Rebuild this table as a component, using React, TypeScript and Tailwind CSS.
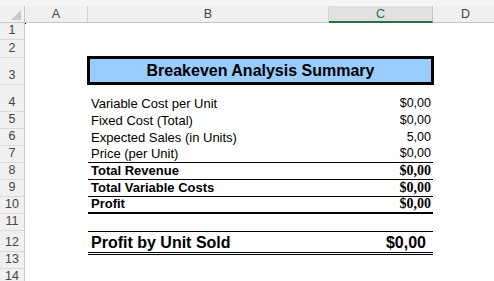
import React from "react";

type Row = {
  n: number;
  h: string;
  kind: "empty" | "title" | "data" | "big";
  label?: string;
  value?: string;
  bold?: boolean;
  border?: "none" | "thin" | "thick";
};

const rows: Row[] = [
  { n: 1, h: "h-[17px]", kind: "empty" },
  { n: 2, h: "h-[18px]", kind: "empty" },
  { n: 3, h: "h-[27px]", kind: "title" },
  { n: 4, h: "h-[27px]", kind: "data", label: "Variable Cost per Unit", value: "$0,00" },
  { n: 5, h: "h-[17px]", kind: "data", label: "Fixed Cost (Total)", value: "$0,00" },
  { n: 6, h: "h-[17px]", kind: "data", label: "Expected Sales (in Units)", value: "5,00" },
  { n: 7, h: "h-[17px]", kind: "data", label: "Price (per Unit)", value: "$0,00", border: "thin" },
  { n: 8, h: "h-[17px]", kind: "data", label: "Total Revenue", value: "$0,00", bold: true, border: "thin" },
  { n: 9, h: "h-[17px]", kind: "data", label: "Total Variable Costs", value: "$0,00", bold: true, border: "thin" },
  { n: 10, h: "h-[17px]", kind: "data", label: "Profit", value: "$0,00", bold: true, border: "thick" },
  { n: 11, h: "h-[17px]", kind: "empty" },
  { n: 12, h: "h-[21px]", kind: "big" },
  { n: 13, h: "h-[17px]", kind: "empty" },
  { n: 14, h: "h-[17px]", kind: "empty" },
];

function RowHead({ n }: { n: number }) {
  return (
    <div className="w-[25px] shrink-0 h-full bg-[#f0f0f0] border-r border-r-[#c6c6c6] border-b border-b-[#dadada] flex items-end justify-center text-[12.5px] leading-[15px] text-[#444] pb-[1px]">
      {n}
    </div>
  );
}

function DataCells({ r }: { r: Row }) {
  const borderCls =
    r.border === "thick"
      ? "border-b-2 border-black"
      : r.border === "thin"
      ? "border-b border-black"
      : "";
  return (
    <div className={`w-[345px] shrink-0 flex h-full items-end ${borderCls}`}>
      <div className={`flex-1 pl-[3px] pb-[1px] text-[13px] leading-[15px] text-black ${r.bold ? "font-bold" : ""}`}>
        {r.label}
      </div>
      <div
        className={
          r.bold
            ? "pr-[2px] pb-[1px] text-[14px] leading-[15px] font-bold text-black font-['Liberation_Serif','Times_New_Roman',serif]"
            : "pr-[2px] pb-[1px] text-[12.5px] leading-[15px] text-black"
        }
      >
        {r.value}
      </div>
    </div>
  );
}

export default function App() {
  return (
    <div className="w-[494px] h-[281px] overflow-hidden bg-white font-['Liberation_Sans',Arial,sans-serif]">
      <div className="h-[6px] bg-[#f5f5f5]" />
      <div className="flex h-[17px] bg-[#f0f0f0] text-[12.5px] leading-[16px] text-[#444]">
        <div className="w-[25px] shrink-0 border-r border-b border-[#c6c6c6] flex items-end justify-end pr-[3px] pb-[2px]">
          <svg width="10" height="10" viewBox="0 0 10 10">
            <polygon points="10,0 10,10 0,10" fill="#c8c8c8" />
          </svg>
        </div>
        <div className="w-[63px] shrink-0 border-r border-r-[#d4d4d4] border-b border-b-[#c6c6c6] flex items-center justify-center">A</div>
        <div className="w-[241px] shrink-0 border-r border-r-[#d4d4d4] border-b border-b-[#c6c6c6] flex items-center justify-center">B</div>
        <div className="w-[104px] shrink-0 bg-[#e1e1e1] border-r border-r-[#c6c6c6] border-b-2 border-b-[#217346] flex items-center justify-center text-[#217346]">C</div>
        <div className="w-[66px] shrink-0 border-r border-r-[#d4d4d4] border-b border-b-[#c6c6c6] flex items-center justify-center">D</div>
        <div className="flex-1 border-b border-b-[#c6c6c6]" />
      </div>
      {rows.map((r) => (
        <div key={r.n} className={`flex ${r.h}`}>
          <RowHead n={r.n} />
          <div className="w-[63px] shrink-0 h-full">
            {r.n === 1 && <div className="w-[1px] h-[1px] bg-black" />}
          </div>
          {r.kind === "title" && (
            <div className="-ml-[1px] -mt-[2px] w-[347px] h-[29px] shrink-0 self-start border-[3px] border-black bg-[#99ccff] flex items-center justify-center text-[16px] leading-[16px] font-bold text-black">
              Breakeven Analysis Summary
            </div>
          )}
          {r.kind === "data" && <DataCells r={r} />}
          {r.kind === "big" && (
            <div className="w-[345px] h-[24px] shrink-0 self-start border-t border-t-black border-b-[3px] border-b-black border-double flex items-start pt-[1px] text-[16px] leading-[19px] font-bold text-black">
              <div className="flex-1 pl-[3px]">Profit by Unit Sold</div>
              <div className="pr-[7px]">$0,00</div>
            </div>
          )}
        </div>
      ))}
    </div>
  );
}
